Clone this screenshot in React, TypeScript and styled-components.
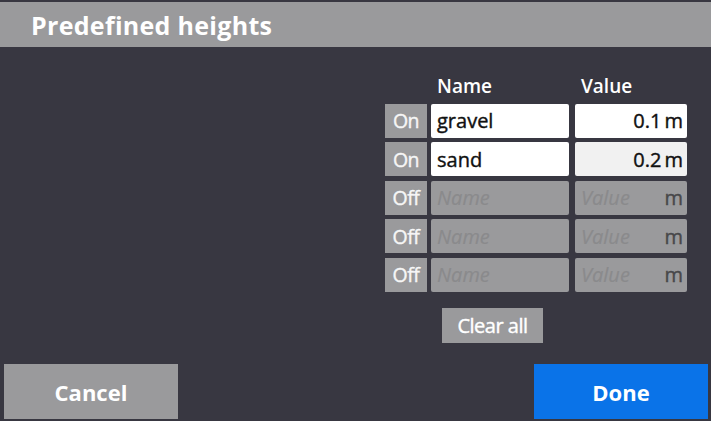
import React from "react";
import styled, { createGlobalStyle } from "styled-components";

const Global = createGlobalStyle`
  html, body { margin: 0; padding: 0; background: #383741; }
  body { width: 711px; height: 421px; overflow: hidden; font-family: "Open Sans", "Noto Sans", sans-serif; }
  * { box-sizing: border-box; }
`;

const Screen = styled.div`
  width: 711px;
  height: 421px;
  background: #383741;
  display: flex;
  flex-direction: column;
`;

const TitleBar = styled.div`
  margin-top: 2px;
  height: 45px;
  background: #9a9a9c;
  display: flex;
  align-items: center;
  padding-left: 31px;
  color: #ffffff;
  font-size: 25px;
  font-weight: 700;
  letter-spacing: 0.3px;
`;

const Body = styled.div`
  flex: 1;
  display: flex;
  flex-direction: column;
  align-items: flex-end;
  padding: 27px 24px 0 0;
`;

const Table = styled.div`
  display: grid;
  grid-template-columns: 42px 142px 118px;
  row-gap: 4.5px;
  width: 302px;
`;

const HeaderCell = styled.div<{ $col: number }>`
  grid-column: ${(p) => p.$col};
  color: #ffffff;
  font-size: 19px;
  font-weight: 600;
  height: 25px;
  line-height: 24px;
  padding-left: ${(p) => (p.$col === 2 ? 10 : 12)}px;
`;

const Toggle = styled.div`
  grid-column: 1;
  height: 34px;
  background: #9a9a9c;
  color: #f6f6f6;
  font-size: 19.5px;
  -webkit-text-stroke: 0.4px currentColor;
  display: flex;
  align-items: center;
  justify-content: center;
  letter-spacing: -0.5px;
`;

const Field = styled.div<{ $on: boolean; $tint?: boolean; $value?: boolean }>`
  height: 34px;
  margin-left: ${(p) => (p.$value ? 6 : 4)}px;
  border-radius: 2px;
  background: ${(p) => (p.$on ? (p.$tint ? "#f1f1f1" : "#ffffff") : "#9a9a9c")};
  display: flex;
  align-items: center;
  padding: 0 4px 0 6px;
  font-size: 20px;
  color: #111111;
  -webkit-text-stroke: 0.4px currentColor;
`;

const Placeholder = styled.span`
  font-style: italic;
  color: #8a8a8c;
  -webkit-text-stroke: 0.2px currentColor;
`;

const Unit = styled.span<{ $on: boolean }>`
  color: ${(p) => (p.$on ? "#111111" : "#48484a")};
  margin-left: ${(p) => (p.$on ? "3px" : "auto")};
`;

const Num = styled.span`
  margin-left: auto;
`;

const ClearRow = styled.div`
  width: 302px;
  display: flex;
  padding-left: 57px;
  margin-top: 16px;
`;

const ClearButton = styled.div`
  width: 101px;
  height: 35px;
  background: #9a9a9c;
  color: #ffffff;
  font-size: 20px;
  -webkit-text-stroke: 0.4px currentColor;
  display: flex;
  align-items: center;
  justify-content: center;
  letter-spacing: -0.5px;
`;

const Footer = styled.div`
  display: flex;
  justify-content: space-between;
  padding: 0 3px 2px 4px;
`;

const FooterButton = styled.div<{ $primary?: boolean }>`
  width: 174px;
  height: 55px;
  background: ${(p) => (p.$primary ? "#0a73e8" : "#9a9a9c")};
  color: #ffffff;
  font-size: 22px;
  font-weight: 700;
  display: flex;
  align-items: center;
  justify-content: center;
`;

type Row = { on: boolean; name?: string; value?: string };

const rows: Row[] = [
  { on: true, name: "gravel", value: "0.1" },
  { on: true, name: "sand", value: "0.2" },
  { on: false },
  { on: false },
  { on: false },
];

export default function App() {
  return (
    <Screen>
      <Global />
      <TitleBar>Predefined heights</TitleBar>
      <Body>
        <Table>
          <HeaderCell $col={2}>Name</HeaderCell>
          <HeaderCell $col={3}>Value</HeaderCell>
          {rows.map((r, i) => (
            <React.Fragment key={i}>
              <Toggle>{r.on ? "On" : "Off"}</Toggle>
              <Field $on={r.on}>
                {r.on ? r.name : <Placeholder>Name</Placeholder>}
              </Field>
              <Field $on={r.on} $tint={i === 1} $value>
                {r.on ? <Num>{r.value}</Num> : <Placeholder>Value</Placeholder>}
                <Unit $on={r.on}>m</Unit>
              </Field>
            </React.Fragment>
          ))}
        </Table>
        <ClearRow>
          <ClearButton>Clear all</ClearButton>
        </ClearRow>
      </Body>
      <Footer>
        <FooterButton>Cancel</FooterButton>
        <FooterButton $primary>Done</FooterButton>
      </Footer>
    </Screen>
  );
}
